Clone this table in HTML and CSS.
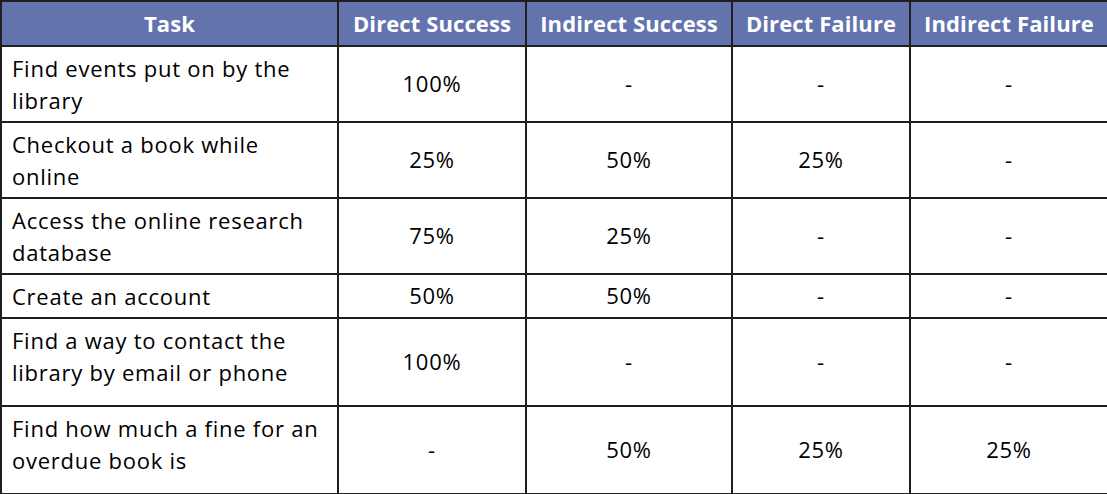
FILE: index.html
```html
<!DOCTYPE html>
<html>
<head>
<meta charset="utf-8">
<link rel="stylesheet" href="styles.css">
</head>
<body>
<table class="results">
  <colgroup>
    <col class="c-task">
    <col class="c-ds">
    <col class="c-is">
    <col class="c-df">
    <col class="c-if">
  </colgroup>
  <thead>
    <tr class="head">
      <th>Task</th>
      <th>Direct Success</th>
      <th>Indirect Success</th>
      <th>Direct Failure</th>
      <th>Indirect Failure</th>
    </tr>
  </thead>
  <tbody>
    <tr class="r-mid">
      <td class="task">Find events put on by the library</td>
      <td>100%</td><td>-</td><td>-</td><td>-</td>
    </tr>
    <tr class="r-mid">
      <td class="task">Checkout a book while online</td>
      <td>25%</td><td>50%</td><td>25%</td><td>-</td>
    </tr>
    <tr class="r-mid">
      <td class="task">Access the online research database</td>
      <td>75%</td><td>25%</td><td>-</td><td>-</td>
    </tr>
    <tr class="r-short">
      <td class="task">Create an account</td>
      <td>50%</td><td>50%</td><td>-</td><td>-</td>
    </tr>
    <tr class="r-tall">
      <td class="task">Find a way to contact the library by email or phone</td>
      <td>100%</td><td>-</td><td>-</td><td>-</td>
    </tr>
    <tr class="r-tall">
      <td class="task">Find how much a fine for an overdue book is</td>
      <td>-</td><td>50%</td><td>25%</td><td>25%</td>
    </tr>
  </tbody>
</table>
</body>
</html>
```
FILE: styles.css
```css
html, body {
  margin: 0;
  padding: 0;
  background: #ffffff;
}

.results {
  border-collapse: collapse;
  table-layout: fixed;
  width: 1107px;
  font-family: "Open Sans", Lato, sans-serif;
  font-size: 22px;
  letter-spacing: 0.75px;
  color: #000;
}

.c-task { width: 337px; }
.c-ds { width: 188px; }
.c-is { width: 206px; }
.c-df { width: 178px; }
.c-if { width: 198px; }

.results th,
.results td {
  border: 2px solid #1f1f1f;
  padding: 0 10px 2px;
  text-align: center;
  vertical-align: middle;
  line-height: 32px;
}

.head {
  height: 45px;
}

.head th {
  background: #6273ae;
  color: #ffffff;
  font-weight: 700;
  font-size: 22px;
  letter-spacing: 0.1px;
  padding: 0 2px 2px;
  white-space: nowrap;
}

.results td.task {
  text-align: left;
  vertical-align: top;
  padding-top: 5px;
  padding-bottom: 0;
}

.r-mid { height: 76px; }
.r-short { height: 44px; }
.r-tall { height: 88px; }
```
